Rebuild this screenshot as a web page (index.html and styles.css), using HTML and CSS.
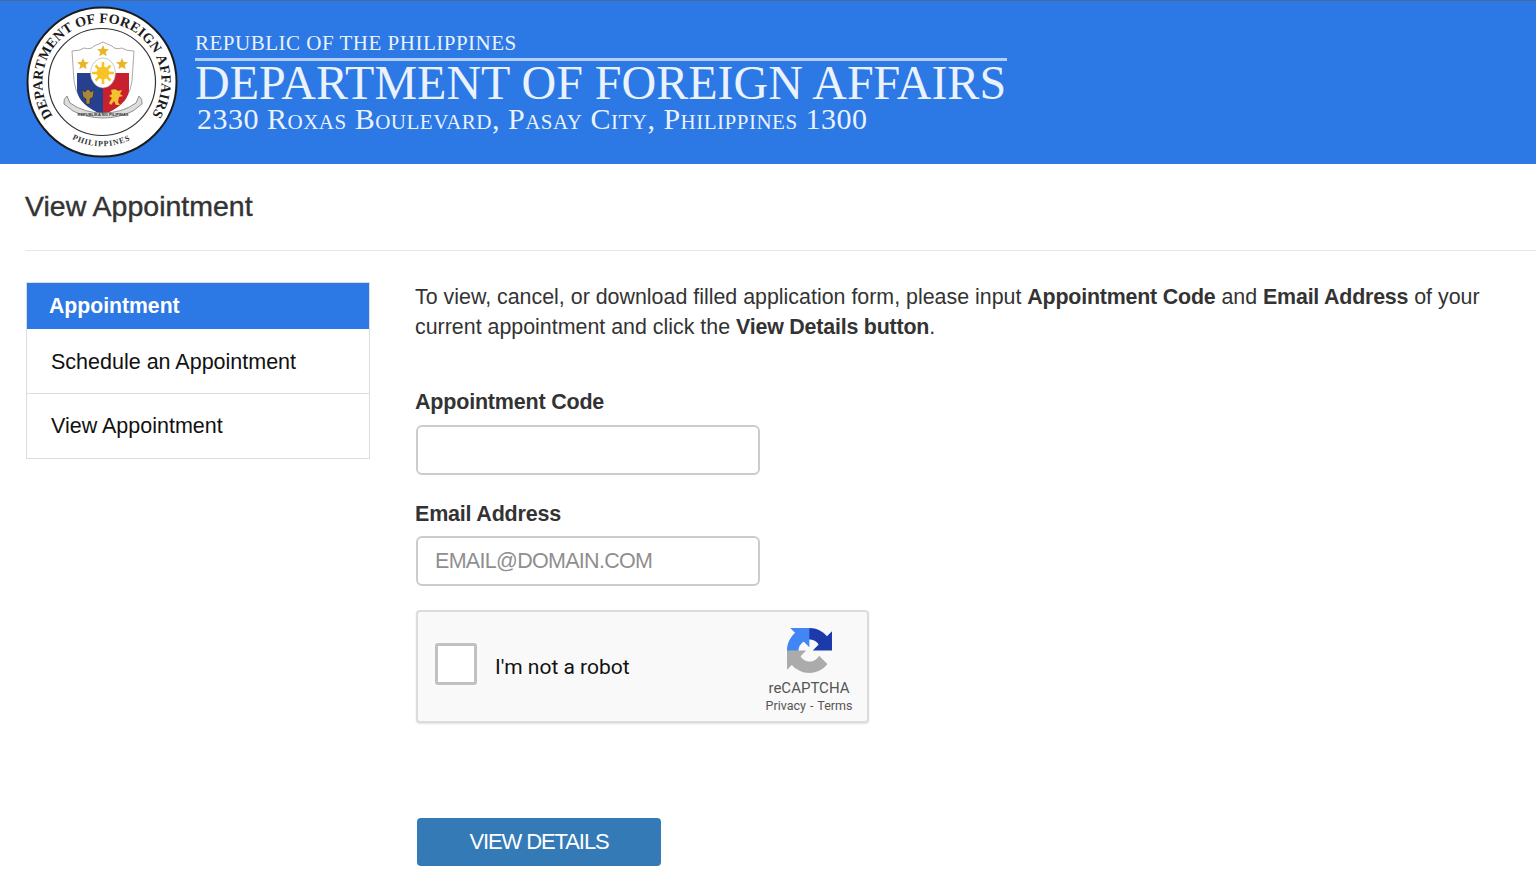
FILE: index.html
```html
<!DOCTYPE html>
<html lang="en">
<head>
<meta charset="utf-8">
<title>View Appointment</title>
<link rel="stylesheet" href="styles.css">
</head>
<body>
<header class="banner">
  <svg class="seal" viewBox="0 0 152 152" aria-hidden="true">
    <circle cx="76" cy="76" r="74.500" fill="#fff" stroke="#1b1b1b" stroke-width="2"/>
    <circle cx="76" cy="76" r="53.500" fill="#fff" stroke="#333" stroke-width="1.200"/>
    <defs>
      <path id="arcTop" d="M27 110 A 59.500 59.500 0 1 1 125 110"/>
      <path id="arcBottom" d="M46 133 A 65 65 0 0 0 106 133"/>
    </defs>
    <text class="seal-text"><textPath href="#arcTop" textLength="257">DEPARTMENT OF FOREIGN AFFAIRS</textPath></text>
    <text class="seal-small"><textPath href="#arcBottom" textLength="60">PHILIPPINES</textPath></text>
    <path d="M46 45 q8 0 12-3 q7 2 10-2 q5-2 9-4 q4 2 9 4 q3 4 10 2 q4 3 12 3 l-2 30 q-1 20-29 34 q-28-14-29-34z" fill="#fff" stroke="#aaa"/>
    <path d="M51 67 h14 q3 12 12 14 v28 q-24-10-26-24z" fill="#26408f"/>
    <path d="M103 67 h-14 q-3 12-12 14 v28 q24-10 26-24z" fill="#c8202c"/>
    <ellipse cx="77" cy="67" rx="12.500" ry="15" fill="#fff" stroke="#999" stroke-width=".5"/>
    <path d="M77 56v22M66 67h22M69.500 59.500l15 15M84.500 59.500l-15 15" stroke="#f7c325" stroke-width="2.500"/>
    <circle cx="77" cy="67" r="6.500" fill="#f7c325"/>
    <path d="M77 39l1.700 4 4.300.3-3.300 2.800 1 4.200-3.700-2.300-3.700 2.300 1-4.200-3.300-2.800 4.300-.3zM57 52l1.700 4 4.300.3-3.300 2.800 1 4.200-3.700-2.300-3.700 2.300 1-4.200-3.300-2.800 4.300-.3zM96 52l1.700 4 4.300.3-3.300 2.800 1 4.200-3.700-2.300-3.700 2.300 1-4.200-3.300-2.800 4.300-.3z" fill="#e9b526"/>
    <path d="M56 84l3 2 3-3 3 3 3-2-1 7-3 2v5h-4v-5l-3-2z" fill="#a5863b" stroke="#222" stroke-width=".5"/>
    <path d="M85 84q5-2 7 1l4-1-2 4 3 2-4 1-1 5 2 3h-4l-2-4-3 4-2-2 3-5-3-2 3-2z" fill="#f3c22f"/>
    <path d="M41 90q-4 3-3 8l9 7q14 7 30 7t30-7l9-7q1-5-3-8l-3 7q-14 10-33 10t-33-10z" fill="#ddd" stroke="#777" stroke-width=".8"/>
    <text class="seal-motto" x="77" y="110" text-anchor="middle">REPUBLIKA NG PILIPINAS</text>
  </svg>
  <div class="brand">
    <div class="brand-top">Republic of the Philippines</div>
    <div class="brand-name">Department of Foreign Affairs</div>
    <div class="brand-address">2330 Roxas Boulevard, Pasay City, Philippines 1300</div>
  </div>
</header>

<h1 class="page-title">View Appointment</h1>

<main class="layout">
  <nav class="side">
    <div class="side-head">Appointment</div>
    <a class="side-link" href="#">Schedule an Appointment</a>
    <a class="side-link" href="#">View Appointment</a>
  </nav>

  <section class="content">
    <p class="intro">To view, cancel, or download filled application form, please input <b>Appointment Code</b> and <b>Email Address</b> of your current appointment and click the <b>View Details button</b>.</p>

    <label class="field-label field-first" for="code">Appointment Code</label>
    <input class="field" id="code" type="text">

    <label class="field-label field-second" for="email">Email Address</label>
    <input class="field" id="email" type="text" placeholder="EMAIL@DOMAIN.COM">

    <div class="captcha">
      <span class="captcha-box"></span>
      <span class="captcha-text">I'm not a robot</span>
      <div class="captcha-logo">
        <svg class="captcha-icon" viewBox="0 0 64 64" aria-hidden="true">
          <path d="M64 31.955l-.033-1.37V4.687l-7.16 7.16C50.948 4.674 42.033.093 32.050.093c-10.400 0-19.622 4.960-25.458 12.640l11.736 11.860a15.550 15.550 0 0 1 4.754-5.334c2.050-1.600 4.952-2.906 8.968-2.906.485 0 .860.057 1.135.163 4.976.393 9.288 3.140 11.828 7.124l-8.307 8.307c10.522-.040 22.400-.066 27.295.006" fill="#1c3aa9"/>
          <path d="M31.862.094l-1.370.033H4.594l7.160 7.160C4.580 13.147 0 22.060 0 32.046c0 10.400 4.960 19.622 12.640 25.458l11.860-11.736a15.550 15.550 0 0 1-5.334-4.754c-1.600-2.050-2.906-4.952-2.906-8.968 0-.485.057-.860.163-1.135.393-4.976 3.140-9.288 7.124-11.828l8.307 8.307C31.820 16.870 31.800 5 31.862.094" fill="#4285f4"/>
          <path d="M0 32.045l.033 1.370v25.898l7.160-7.160c5.860 7.173 14.774 11.754 24.760 11.754 10.400 0 19.622-4.960 25.458-12.640l-11.736-11.860a15.550 15.550 0 0 1-4.754 5.334c-2.050 1.600-4.952 2.906-8.968 2.906-.485 0-.860-.057-1.135-.163-4.976-.393-9.288-3.140-11.828-7.124l8.307-8.307c-10.522.040-22.400.066-27.295-.006" fill="#ababab"/>
        </svg>
        <div class="captcha-brand">reCAPTCHA</div>
        <div class="captcha-links">Privacy - Terms</div>
      </div>
    </div>

    <button class="submit" type="button">VIEW DETAILS</button>
  </section>
</main>
</body>
</html>
```
FILE: styles.css
```css
* { box-sizing: border-box; }
html, body { margin: 0; height: 891px; overflow: hidden; background: #fff; }
body { font-family: "Liberation Sans", Arial, sans-serif; color: #333; }

.banner {
  height: 164px;
  background: #2c78e4;
  border-top: 1px solid #4a6b98;
  display: flex;
  align-items: flex-start;
  padding: 5px 0 0 26px;
}
.seal { width: 152px; height: 152px; flex: none; }
.seal-text { font: bold 14px "Liberation Serif", serif; fill: #1a1a1a; }
.seal-small { font: bold 8px "Liberation Serif", serif; fill: #333; }
.seal-motto { font: bold 4px "Liberation Sans", sans-serif; fill: #333; }

.brand {
  margin-left: 17px;
  width: 812px;
  padding-top: 23px;
  font-family: "Liberation Serif", serif;
  color: #eaf2fd;
  text-transform: uppercase;
}
.brand-top {
  font-size: 21px;
  line-height: 28px;
  letter-spacing: 0.5px;
  border-bottom: 3px solid #b4cff6;
  height: 32px;
}
.brand-name {
  font-size: 48px;
  line-height: 44px;
  letter-spacing: 0;
  white-space: nowrap;
}
.brand-address {
  font-size: 30px;
  line-height: 28px;
  padding-left: 2px;
  letter-spacing: 0.5px;
  text-transform: none;
  font-variant: small-caps;
  white-space: nowrap;
}

.page-title {
  margin: 0 0 0 25px;
  height: 87px;
  padding-top: 25px;
  font-size: 28.500px;
  line-height: 34px;
  font-weight: 400;
  color: #333;
  border-bottom: 1px solid #e6e6e6;
  -webkit-text-stroke: 0.4px #333;
}

.layout {
  display: flex;
  align-items: flex-start;
  padding: 31px 0 0 26px;
}
.side {
  width: 344px;
  flex: none;
  border: 1px solid #ddd;
  display: flex;
  flex-direction: column;
}
.side-head {
  height: 46px;
  line-height: 46px;
  padding-left: 22px;
  background: #2c78e4;
  color: #fff;
  font-size: 21.200px;
  font-weight: 700;
}
.side-link {
  height: 64px;
  line-height: 66px;
  padding-left: 24px;
  font-size: 21.500px;
  color: #111;
  text-decoration: none;
  background: #fff;
}
.side-link + .side-link { height: 65px; line-height: 64px; border-top: 1px solid #ddd; }

.content { margin-left: 45px; width: 1075px; }
.intro {
  margin: 0;
  font-size: 21.400px;
  line-height: 30px;
  color: #333;
}
.intro b { letter-spacing: -0.2px; }
.field-label {
  display: block;
  font-size: 21.500px;
  line-height: 30px;
  font-weight: 700;
  letter-spacing: -0.2px;
  color: #333;
}
.field-first { margin: 45px 0 8px; }
.field-second { margin: 24px 0 7px; }
.field {
  display: block;
  width: 344px;
  height: 50px;
  margin-left: 1px;
  padding: 0 18px 0 17px;
  border: 2px solid #ccc;
  border-radius: 6px;
  background: #fff;
  font: 21.500px "Liberation Sans", Arial, sans-serif;
  letter-spacing: -0.7px;
  outline: none;
}
.field::placeholder { color: #8f8f8f; opacity: 1; }

.captcha {
  width: 453px;
  height: 113px;
  margin: 24px 0 0 1px;
  border: 2px solid #dcdcdc;
  border-radius: 4px;
  background: #f9f9f9;
  box-shadow: 0 1px 2px rgba(0, 0, 0, .12);
  display: flex;
  align-items: center;
  padding-left: 17px;
}
.captcha-box {
  width: 42px;
  height: 42px;
  flex: none;
  margin-bottom: 6px;
  border: 3px solid #c1c1c1;
  border-radius: 3px;
  background: #fff;
}
.captcha-text {
  margin-left: 18px;
  font: 21px Roboto, "Liberation Sans", sans-serif;
  color: #111;
}
.captcha-logo {
  margin-left: auto;
  width: 120px;
  margin-right: -2px;
  padding-top: 8px;
  display: flex;
  flex-direction: column;
  align-items: center;
  color: #555;
}
.captcha-icon { width: 45px; height: 45px; display: block; margin-bottom: 6px; }
.captcha-brand { font: 15px/18px Roboto, "Liberation Sans", sans-serif; }
.captcha-links { font: 12.500px/17px Roboto, "Liberation Sans", sans-serif; word-spacing: 1px; }

.submit {
  display: block;
  width: 244px;
  height: 48px;
  margin: 95px 0 0 2px;
  border: 0;
  border-radius: 4px;
  background: #337ab7;
  color: #fff;
  font: 22px "Liberation Sans", Arial, sans-serif;
  letter-spacing: -1.1px;
}
```
